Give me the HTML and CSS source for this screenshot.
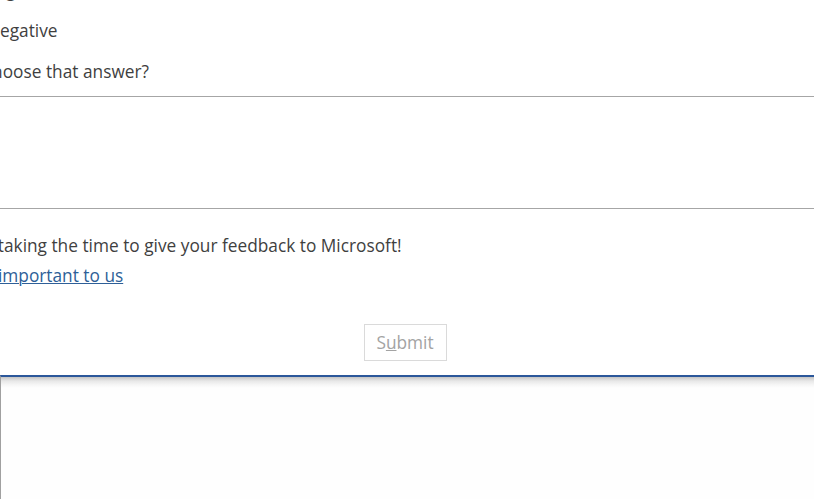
FILE: index.html
```
<!DOCTYPE html>
<html>
<head>
<meta charset="utf-8">
<link rel="stylesheet" href="styles.css">
</head>
<body>
<div class="page">
  <div class="form">
    <div class="line option-top">Agree</div>
    <div class="line option">Negative</div>
    <div class="line question">Why did you choose that answer?</div>
  </div>
  <div class="answer"></div>
  <div class="form">
    <p class="line thanks">Thank you for taking the time to give your feedback to Microsoft!</p>
    <a class="line privacy" href="#">Your privacy is important to us</a>
  </div>
  <div class="actions">
    <button class="submit" disabled>S<u>u</u>bmit</button>
  </div>
  <div class="lower"></div>
</div>
</body>
</html>
```
FILE: styles.css
```
html, body {
  margin: 0;
  padding: 0;
  background: #ffffff;
  overflow: hidden;
}
.page {
  width: 814px;
  height: 499px;
  display: flex;
  flex-direction: column;
  font-family: "Open Sans", "Noto Sans", sans-serif;
  font-size: 17.3px;
  color: #3f3f3f;
}
.form {
  display: flex;
  flex-direction: column;
  align-items: flex-start;
}
.line {
  height: 20px;
  line-height: 20px;
  white-space: nowrap;
  margin: 0;
}
.option-top {
  margin-top: -19px;
  margin-left: -5px;
}
.option {
  margin-top: 20px;
  margin-left: -13px;
}
.question {
  margin-top: 21px;
  margin-left: -120px;
}
.answer {
  margin-top: 14px;
  height: 111px;
  border-top: 1px solid #a6a6a6;
  border-bottom: 1px solid #a6a6a6;
}
.thanks {
  margin-top: 27px;
  margin-left: -118px;
}
.privacy {
  margin-top: 10px;
  margin-left: -123px;
  color: #2e5f98;
  text-decoration-thickness: 1px;
}
.actions {
  display: flex;
  justify-content: center;
  margin-top: 38px;
  padding-right: 4px;
}
.submit {
  width: 83px;
  height: 37px;
  border: 1px solid #dadada;
  background: #ffffff;
  color: #a3a3a3;
  font-family: inherit;
  font-size: 17.3px;
  padding: 0;
}
.lower {
  margin-top: 14px;
  flex: 1;
  border-top: 2px solid #2b579a;
  border-left: 1px solid #a0a0a0;
  background: linear-gradient(to bottom, #c4c4c4 0px, #e8e8e8 4px, #f7f7f7 8px, #fefefe 11px, #fefefe 100%);
}
```
